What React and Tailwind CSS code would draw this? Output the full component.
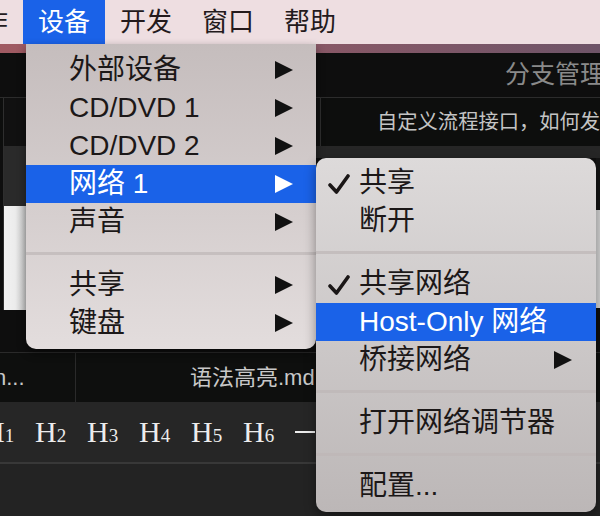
import React from "react";

const Arrow = ({ white }) => (
  <svg width="18" height="18" viewBox="0 0 18 18" className="shrink-0">
    <polygon points="0,0 18,9 0,18" fill={white ? "#ffffff" : "#111111"} />
  </svg>
);

const Check = () => (
  <svg width="22" height="20" viewBox="0 0 22 20" className="absolute left-[12px] top-[10px]">
    <path d="M2 11 L8.5 18 L20 2" fill="none" stroke="#1a1616" strokeWidth="3.6" strokeLinecap="round" strokeLinejoin="round" />
  </svg>
);

const MainRow = ({ label, active }) => (
  <div
    className={
      "h-[38px] flex items-center justify-between pl-[43px] pr-[23px] " +
      (active ? "bg-[#1a62e8] text-white" : "text-[#1c1818]")
    }
  >
    <span>{label}</span>
    <Arrow white={active} />
  </div>
);

const SubRow = ({ label, active, checked, arrow }) => (
  <div
    className={
      "relative h-[38px] flex items-center justify-between pl-[43px] pr-[24px] " +
      (active ? "bg-[#1a62e8] text-white" : "text-[#1c1818]")
    }
  >
    {checked && <Check />}
    <span className="whitespace-nowrap">{label}</span>
    {arrow && <Arrow white={active} />}
  </div>
);

const Sep = () => (
  <div className="h-[25px] flex items-center">
    <div className="h-[3px] w-full bg-[#bdb6b6]/70" />
  </div>
);

export default function App() {
  const heads = ["1", "2", "3", "4", "5", "6"];
  return (
    <div className="relative w-[600px] h-[516px] overflow-hidden bg-[#232323] font-['Liberation_Sans','Noto_Sans_CJK_SC',sans-serif]">
      {/* macOS menu bar */}
      <div className="h-[44px] bg-[#eedee1] flex items-center text-[26px] text-[#231a1c] overflow-hidden">
        <div className="ml-[-59px] w-[82px] h-full flex items-center justify-center shrink-0">操作</div>
        <div className="w-[82px] h-full flex items-center justify-center shrink-0 bg-[#1a62e8] text-white">设备</div>
        <div className="w-[82px] h-full flex items-center justify-center shrink-0">开发</div>
        <div className="w-[82px] h-full flex items-center justify-center shrink-0">窗口</div>
        <div className="w-[82px] h-full flex items-center justify-center shrink-0">帮助</div>
      </div>
      {/* wallpaper strip */}
      <div className="h-[9px] bg-gradient-to-r from-[#a05a62] via-[#8a5866] to-[#6e5468]" />
      {/* title bar */}
      <div className="h-[44px] bg-[#0e0e0e] flex items-center pl-[505px] text-[25px] text-[#8a8a8a] whitespace-nowrap overflow-hidden">
        分支管理
      </div>
      <div className="h-[1px] bg-[#2c2c2c]" />
      {/* tabs row */}
      <div className="h-[48px] bg-[#0d0e0d] flex">
        <div className="w-[3px]" />
        <div className="w-[1px] bg-[#2e2e2e]" />
        <div className="w-[316px] bg-[#111111]" />
        <div className="w-[1px] bg-[#2e2e2e]" />
        <div className="flex-1 flex items-center pl-[56px] text-[20.3px] text-[#c4c4c4] whitespace-nowrap overflow-hidden">
          自定义流程接口，如何发
        </div>
      </div>
      {/* content area */}
      <div className="h-[206px] bg-[#0e0e0e] flex">
        <div className="w-[3px]" />
        <div className="w-[1px] flex flex-col">
          <div className="h-[164px] bg-[#2e2e2e]" />
        </div>
        <div className="w-[22px] flex flex-col">
          <div className="h-[60px] bg-[#2a2a2a]" />
          <div className="h-[104px] bg-gradient-to-r from-[#f2f2f2] via-[#ececec] to-[#c8c8c8]" />
        </div>
        <div className="flex-1 flex flex-col">
          <div className="h-[12px] bg-[#262626]" />
        </div>
        <div className="w-[4px] flex flex-col">
          <div className="h-[12px] bg-[#262626]" />
          <div className="h-[52px] bg-[#141414]" />
          <div className="h-[98px] bg-[#d4d4d4]" />
        </div>
      </div>
      <div className="h-[1px] bg-[#2a2a2a]" />
      {/* bottom tab bar */}
      <div className="h-[49px] bg-[#0e0f0e] flex text-[22px] text-[#c8c8c8]">
        <div className="w-[75px] flex items-center overflow-hidden whitespace-nowrap">
          <span className="ml-[-6px]">n...</span>
        </div>
        <div className="w-[1px] bg-[#2a2a2a]" />
        <div className="flex-1 flex items-center pl-[114px] whitespace-nowrap">语法高亮.md</div>
      </div>
      {/* toolbar */}
      <div className="h-[60px] bg-[#262626] flex items-center text-[#ececec] font-['Liberation_Serif',serif]">
        <div className="ml-[-17px] flex items-center">
          {heads.map((h) => (
            <div key={h} className="w-[52px] shrink-0 flex items-baseline">
              <span className="text-[30px] leading-none">H</span>
              <span className="text-[19px] leading-none">{h}</span>
            </div>
          ))}
          <div className="w-[20px] h-[2px] bg-[#ececec]" />
        </div>
      </div>
      <div className="h-[2px] bg-[#383838]" />

      {/* main dropdown menu */}
      <div className="absolute left-[26px] top-[44px] w-[290px] rounded-b-[10px] bg-gradient-to-b from-[#c5bdbd] to-[#e3dddd] shadow-[0_4px_10px_rgba(0,0,0,0.45)] pt-[7px] pb-[7px] text-[28px] leading-none">
        <MainRow label="外部设备" />
        <MainRow label="CD/DVD 1" />
        <MainRow label="CD/DVD 2" />
        <MainRow label="网络 1" active />
        <MainRow label="声音" />
        <Sep />
        <MainRow label="共享" />
        <MainRow label="键盘" />
      </div>

      {/* submenu */}
      <div className="absolute left-[316px] top-[158px] w-[280px] rounded-[10px] bg-gradient-to-b from-[#dddada] to-[#bcb7b7] shadow-[0_4px_12px_rgba(0,0,0,0.4)] pt-[6px] pb-[7px] text-[28px] leading-none overflow-hidden">
        <SubRow label="共享" checked />
        <SubRow label="断开" />
        <Sep />
        <SubRow label="共享网络" checked />
        <SubRow label="Host-Only 网络" active />
        <SubRow label="桥接网络" arrow />
        <Sep />
        <SubRow label="打开网络调节器" />
        <Sep />
        <SubRow label="配置..." />
      </div>
    </div>
  );
}
